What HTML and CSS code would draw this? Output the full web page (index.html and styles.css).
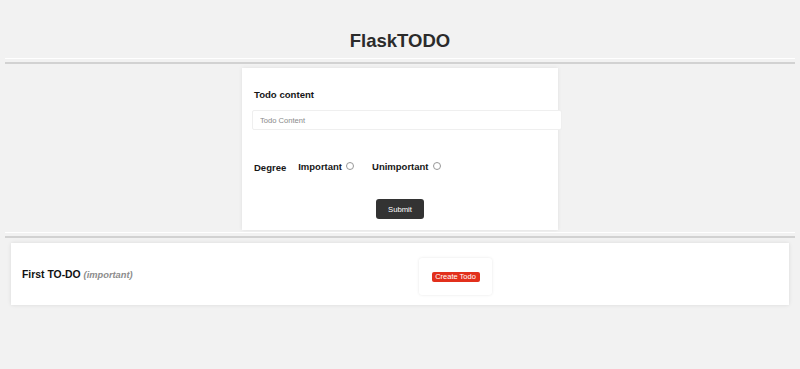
FILE: index.html
```html
<!DOCTYPE html>
<html>
<head>
<meta charset="utf-8">
<title>FlaskTODO</title>
<link rel="stylesheet" href="styles.css">
</head>
<body>
<header class="header">
  <h1 class="title">FlaskTODO</h1>
</header>
<hr class="rule rule-top">
<form class="form-card">
  <label class="field-label">Todo content</label>
  <input class="text-input" type="text" placeholder="Todo Content">
  <div class="degree-row">
    <span class="degree-label">Degree</span>
    <label class="option">Important <input class="radio" type="radio" name="degree"></label>
    <label class="option">Unimportant <input class="radio" type="radio" name="degree"></label>
  </div>
  <div class="actions">
    <button class="submit" type="button">Submit</button>
  </div>
</form>
<hr class="rule rule-mid">
<div class="todo-card">
  <div class="todo-title">First TO-DO <em class="todo-degree">(important)</em></div>
  <div class="todo-actions">
    <div class="action-box"><span class="badge">Create Todo</span></div>
  </div>
</div>
</body>
</html>
```
FILE: styles.css
```css
html, body {
  margin: 0;
  padding: 0;
}
body {
  background: #f2f2f2;
  font-family: "Liberation Sans", Arial, sans-serif;
  color: #111;
  height: 369px;
  overflow: hidden;
}
.header {
  padding-top: 30px;
  text-align: center;
}
.title {
  margin: 0;
  font-size: 18.5px;
  line-height: 21px;
  font-weight: bold;
  color: #2b2b2b;
}
.rule {
  border: 0;
  border-top: 1px solid #ffffff;
  border-bottom: 2px solid #d2d2d2;
  height: 3px;
  margin: 0 5px;
  padding: 0;
}
.rule-top {
  margin-top: 7px;
}
.form-card {
  width: 316px;
  box-sizing: border-box;
  margin: 4px auto 0;
  background: #fff;
  box-shadow: 0 0 4px rgba(0, 0, 0, 0.08);
  padding: 21px 10px 11px;
}
.field-label {
  display: block;
  font-size: 9.6px;
  line-height: 12px;
  font-weight: bold;
  margin-left: 2px;
  margin-bottom: 9px;
  color: #161616;
}
.text-input {
  display: block;
  width: 310px;
  height: 20px;
  box-sizing: border-box;
  border: 1px solid #efefef;
  border-radius: 2px;
  padding: 0 7px;
  font-family: "Liberation Sans", Arial, sans-serif;
  font-size: 7.6px;
  background: #fff;
  outline: none;
}
.text-input::placeholder {
  color: #8a8a8a;
}
.degree-row {
  display: flex;
  align-items: center;
  margin-top: 30px;
  margin-left: 2px;
  height: 12px;
  font-weight: bold;
  font-size: 9.5px;
  color: #161616;
}
.degree-label {
  margin-right: 12px;
  padding-top: 2px;
}
.option {
  display: flex;
  align-items: center;
  margin-right: 18px;
}
.radio {
  width: 8px;
  height: 8px;
  margin: 0 0 1px 4px;
  opacity: 0.75;
}
.actions {
  display: flex;
  justify-content: center;
  margin-top: 27px;
}
.submit {
  width: 48px;
  height: 20px;
  background: #333;
  color: #fff;
  border: 0;
  border-radius: 3px;
  font-family: "Liberation Sans", Arial, sans-serif;
  font-size: 7.7px;
  padding: 0;
}
.rule-mid {
  margin-top: 2px;
}
.todo-card {
  display: grid;
  grid-template-columns: 1fr 1fr;
  align-items: center;
  margin: 5px 11px 0;
  height: 62px;
  box-sizing: border-box;
  padding: 0 11px;
  background: #fff;
  box-shadow: 0 0 4px rgba(0, 0, 0, 0.1);
}
.todo-title {
  font-size: 10.4px;
  font-weight: bold;
  color: #111;
}
.todo-degree {
  font-size: 9.3px;
  color: #8c8c8c;
  font-weight: bold;
}
.todo-actions {
  display: flex;
  padding-left: 19px;
  padding-top: 5px;
}
.action-box {
  width: 73px;
  height: 37px;
  box-sizing: border-box;
  display: flex;
  align-items: center;
  justify-content: center;
  background: #fff;
  border-radius: 3px;
  box-shadow: 0 0 3px rgba(0, 0, 0, 0.1);
}
.badge {
  display: inline-block;
  width: 48px;
  height: 10px;
  line-height: 10px;
  text-align: center;
  background: #e2301c;
  color: #fff;
  border-radius: 2px;
  font-size: 7.5px;
}
```
